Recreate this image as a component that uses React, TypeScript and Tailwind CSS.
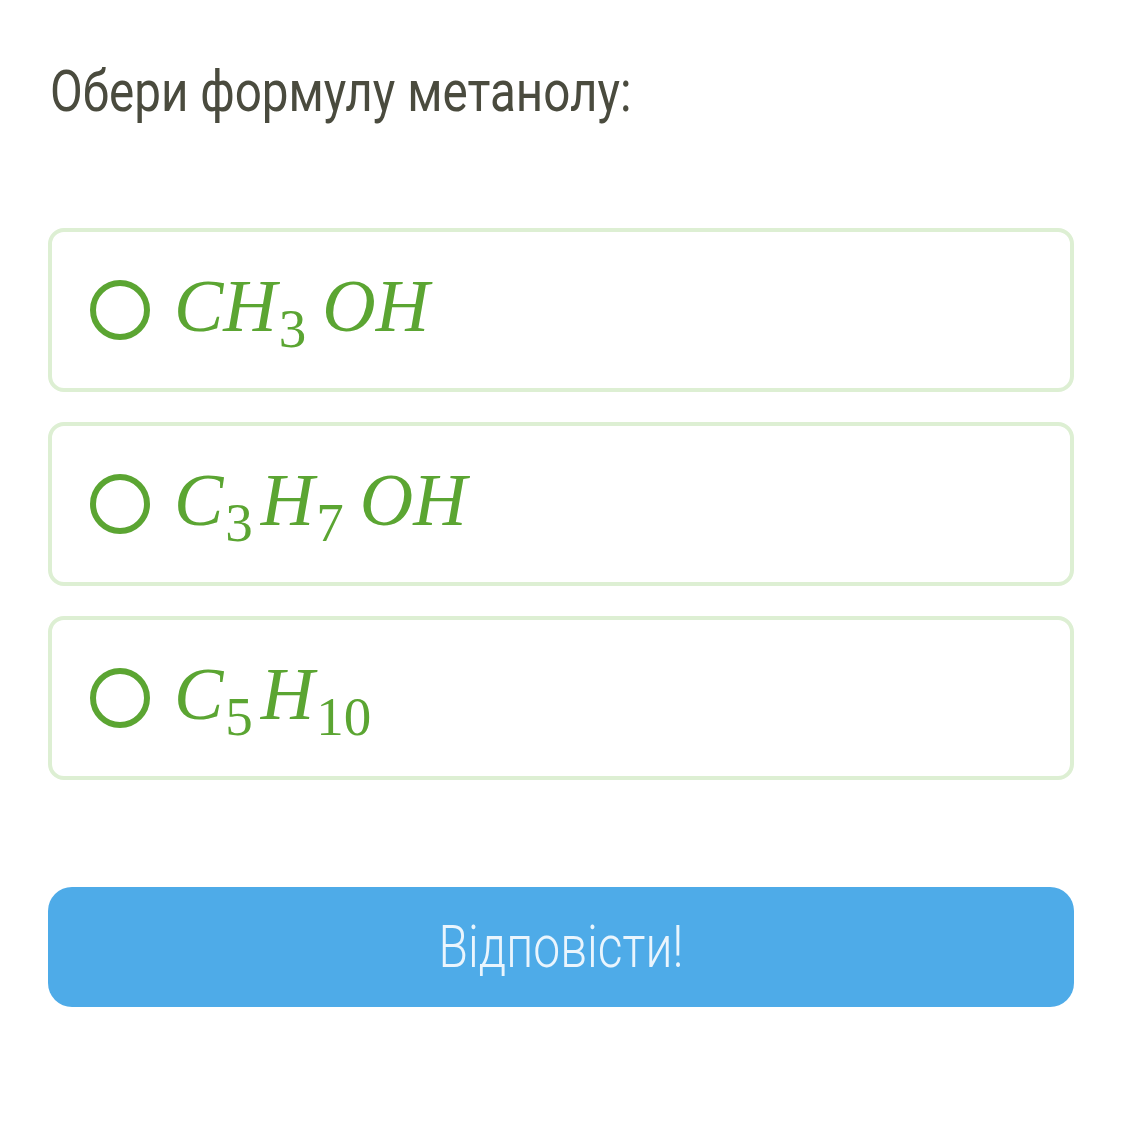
import React from "react";

const green = "text-[#5ba532]";

function Sub({ children }: { children: React.ReactNode }) {
  return (
    <span className="not-italic text-[55px] align-[-16px] ml-[2px]">{children}</span>
  );
}

function Option({ children }: { children: React.ReactNode }) {
  return (
    <div className="flex items-center h-[164px] border-[4px] border-[#ddefd3] rounded-[16px] pl-[38px] bg-white">
      <div className="w-[60px] h-[60px] rounded-full border-[6px] border-[#5ba532] shrink-0" />
      <div
        className={`ml-[24px] mt-[4px] italic text-[74px] leading-none ${green}`}
        style={{ fontFamily: '"Liberation Serif", serif' }}
      >
        {children}
      </div>
    </div>
  );
}

export default function App() {
  return (
    <div className="w-[1122px] h-[1122px] bg-white px-[48px] pt-[58px]">
      <div
        className="text-[58px] leading-[66px] text-[#4a4b3e] pl-[2px]"
        style={{ fontFamily: 'Roboto, "Noto Sans", sans-serif' }}
      >
        <span className="inline-block origin-left scale-x-[0.82] whitespace-nowrap">Обери формулу метанолу:</span>
      </div>
      <div className="mt-[104px] flex flex-col gap-[30px]">
        <Option>
          CH<Sub>3</Sub>
          <span className="ml-[16px]">OH</span>
        </Option>
        <Option>
          C<Sub>3</Sub>
          <span className="ml-[8px]">H</span>
          <Sub>7</Sub>
          <span className="ml-[16px]">OH</span>
        </Option>
        <Option>
          C<Sub>5</Sub>
          <span className="ml-[8px]">H</span>
          <Sub>10</Sub>
        </Option>
      </div>
      <button
        className="mt-[107px] w-full h-[120px] rounded-[24px] bg-[#4eabe8] flex items-center justify-center text-[#eaf5fd] text-[60px] font-light"
        style={{ fontFamily: 'Roboto, "Noto Sans", sans-serif' }}
      >
        <span className="inline-block scale-x-[0.8] whitespace-nowrap">Відповісти!</span>
      </button>
    </div>
  );
}
